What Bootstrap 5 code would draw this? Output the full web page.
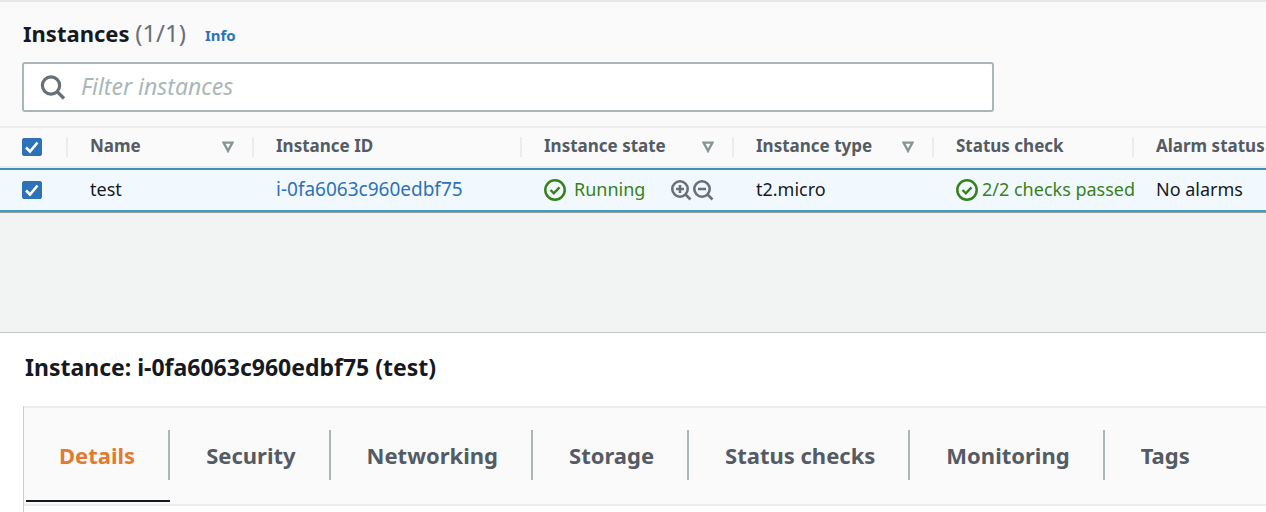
<!DOCTYPE html>
<html lang="en">
<head>
<meta charset="utf-8">
<meta name="viewport" content="width=device-width, initial-scale=1">
<title>Instances</title>
<link href="https://cdn.jsdelivr.net/npm/bootstrap@5.3.0/dist/css/bootstrap.min.css" rel="stylesheet">
<style>
  body { font-family: "Noto Sans", "Open Sans", sans-serif; font-size: 18px; line-height: 24px; color: #16191f; background: #fff; overflow-x: hidden; }
  a { text-decoration: none; color: #2d72b8; }
  .list-panel { background: #fafafa; border-top: 2px solid #e6e9e9; }
  .list-head { padding: 15px 22px 14px; }
  .page-title { font-size: 22px; line-height: 32px; padding-left: 1px; }
  .count { color: #687078; font-weight: 400; font-size: 24px; }
  .info-link { font-size: 15px; font-weight: 700; line-height: 20px; margin-left: 19px; }
  .search-box { max-width: 972px; height: 50px; border: 2px solid #aab7b8; border-radius: 3px; background: #fff; margin-top: 13px; padding: 0 16px; gap: 15px; color: #687078; }
  .search-box input { font-size: 23px; line-height: 32px; color: #16191f; outline: 0; padding: 0 0 3px; }
  .search-box input::placeholder { color: #aab7b8; font-style: italic; opacity: 1; }

  .grid-table { table-layout: fixed; width: 100%; min-width: 1266px; border-collapse: separate; border-spacing: 0; }
  .grid-table th, .grid-table td { padding: 0; white-space: nowrap; }
  .grid-table th { height: 42px; border-top: 2px solid #eaeded; border-bottom: 2px solid #eaeded; color: #545b64; font-size: 17px; font-weight: 700; }
  .grid-table td { height: 44px; border-top: 2px solid #3f90b5; border-bottom: 2px solid #3f9bc4; background: #f2f9fe; }
  .col-check { width: 66px; }
  .col-name { width: 186px; }
  .col-id { width: 268px; }
  .col-state { width: 212px; }
  .col-mid { width: 200px; }
  .head-cell { height: 20px; line-height: 20px; border-left: 2px solid #eaeded; padding: 0 18px 0 22px; }
  .head-cell > span { padding-bottom: 2px; }
  .body-cell { padding: 0 0 2px 24px; height: 40px; }
  .body-cell svg { margin-top: 2px; }
  .id-link { font-size: 19px; }
  .status-ok { color: #37811c; }
  .zoom-icons { color: #687078; margin-left: 26px; gap: 1px; }
  .sort-btn { color: #879596; line-height: 0; }
  .tick { width: 20px; height: 18px; margin: 0 0 0 22px; display: block; }
  .tick[type=checkbox] { border-radius: 2px; }
  .tick:checked { background-color: #2d72b8; border-color: #2d72b8; }
  .tick:checked[type=checkbox] { background-size: 20px 18px; background-image: url("data:image/svg+xml,%3Csvg xmlns='http://www.w3.org/2000/svg' viewBox='0 0 20 18'%3E%3Cpath d='M4 9.500l4 4L15.500 4.500' fill='none' stroke='%23fff' stroke-width='2.600'/%3E%3C/svg%3E"); }

  .split-area { height: 121px; background: #f2f4f4; border-top: 1px solid #959fa1; border-bottom: 1px solid #c3c8c8; }
  .detail-title { font-size: 23px; line-height: 32px; padding: 18px 25px 23px; }
  .tab-panel { margin-left: 23px; border-left: 1px solid #c9cfcf; min-height: 106px; }
  .tab-strip { background: #fafafa; border-top: 2px solid #eaeded; border-bottom: 2px solid #eaeded; padding-left: 2px; }
  .tab-strip .tab-btn { border: 0; border-bottom: 2px solid transparent; background: none; padding: 22px 0 20px; margin-bottom: 2px; color: #545b64; font-size: 22px; font-weight: 700; white-space: nowrap; }
  .tab-btn span { display: block; height: 50px; line-height: 50px; padding: 0 33px 0 36px; border-right: 2px solid #aab7b8; }
  .tab-strip .nav-item:last-child span { border-right: 0; }
  .tab-strip .tab-btn.active { color: #e07b33; border-bottom-color: #16191f; }
  .tab-btn.active span { padding-left: 33px; }
</style>
<script src="https://cdn.jsdelivr.net/npm/bootstrap@5.3.0/dist/js/bootstrap.bundle.min.js"></script>
</head>
<body>
<svg class="d-none" aria-hidden="true">
  <symbol id="i-ok" viewBox="0 0 22 22"><circle cx="11" cy="11" r="9.700" fill="none" stroke="currentColor" stroke-width="2.500"/><path d="M6.500 11l3.300 3.300 5.700-6" fill="none" stroke="currentColor" stroke-width="2.400"/></symbol>
  <symbol id="i-sort" viewBox="0 0 12 12"><path d="M1.600 1.600h8.800L6 9.800z" fill="none" stroke="currentColor" stroke-width="2.400"/></symbol>
  <symbol id="i-plus" viewBox="0 0 21 21"><circle cx="9" cy="9" r="7.700" fill="none" stroke="currentColor" stroke-width="2.600"/><path d="M14.500 14.500l5 5M5 9h8M9 5v8" fill="none" stroke="currentColor" stroke-width="2.600"/></symbol>
  <symbol id="i-minus" viewBox="0 0 21 21"><circle cx="9" cy="9" r="7.700" fill="none" stroke="currentColor" stroke-width="2.600"/><path d="M14.500 14.500l5 5M5 9h8" fill="none" stroke="currentColor" stroke-width="2.600"/></symbol>
</svg>

<section class="list-panel">
  <div class="list-head">
    <div class="d-flex align-items-center">
      <h1 class="page-title fw-bold m-0">Instances <span class="count">(1/1)</span></h1>
      <a href="#" class="info-link mt-1">Info</a>
    </div>
    <div class="search-box d-flex align-items-center">
      <svg width="26" height="26" viewBox="0 0 26 26" fill="none" stroke="currentColor" stroke-width="3.200" aria-hidden="true"><circle cx="11" cy="11.500" r="8.600"/><path d="M17 17.500l7 7"/></svg>
      <input type="text" class="flex-grow-1 border-0 bg-transparent" placeholder="Filter instances" aria-label="Filter instances">
    </div>
  </div>

  <div class="overflow-hidden">
    <table class="grid-table">
      <colgroup><col class="col-check"><col class="col-name"><col class="col-id"><col class="col-state"><col class="col-mid"><col class="col-mid"><col></colgroup>
      <thead>
        <tr>
          <th><input type="checkbox" class="form-check-input tick" checked aria-label="Select all instances"></th>
          <th><div class="head-cell d-flex align-items-center justify-content-between"><span>Name</span><button type="button" class="sort-btn btn p-0 border-0" aria-label="Sort by name"><svg width="12" height="12"><use href="#i-sort"/></svg></button></div></th>
          <th><div class="head-cell d-flex align-items-center"><span>Instance ID</span></div></th>
          <th><div class="head-cell d-flex align-items-center justify-content-between"><span>Instance state</span><button type="button" class="sort-btn btn p-0 border-0" aria-label="Sort by state"><svg width="12" height="12"><use href="#i-sort"/></svg></button></div></th>
          <th><div class="head-cell d-flex align-items-center justify-content-between"><span>Instance type</span><button type="button" class="sort-btn btn p-0 border-0" aria-label="Sort by type"><svg width="12" height="12"><use href="#i-sort"/></svg></button></div></th>
          <th><div class="head-cell d-flex align-items-center"><span>Status check</span></div></th>
          <th><div class="head-cell d-flex align-items-center pe-0"><span>Alarm status</span></div></th>
        </tr>
      </thead>
      <tbody>
        <tr>
          <td><input type="checkbox" class="form-check-input tick" checked aria-label="Select test"></td>
          <td><div class="body-cell d-flex align-items-center">test</div></td>
          <td><div class="body-cell d-flex align-items-center"><a href="#" class="id-link">i-0fa6063c960edbf75</a></div></td>
          <td><div class="body-cell d-flex align-items-center"><svg class="status-ok flex-shrink-0" width="22" height="22"><use href="#i-ok"/></svg><span class="status-ok ms-2">Running</span>
            <span class="zoom-icons d-flex"><button type="button" class="btn p-0 border-0 lh-1 text-reset d-flex" aria-label="Filter in"><svg width="21" height="21"><use href="#i-plus"/></svg></button><button type="button" class="btn p-0 border-0 lh-1 text-reset d-flex" aria-label="Filter out"><svg width="21" height="21"><use href="#i-minus"/></svg></button></span></div></td>
          <td><div class="body-cell d-flex align-items-center">t2.micro</div></td>
          <td class="position-relative z-1"><div class="body-cell status-ok d-flex align-items-center gap-1"><svg class="flex-shrink-0" width="22" height="22"><use href="#i-ok"/></svg>2/2 checks passed</div></td>
          <td><div class="body-cell d-flex align-items-center">No alarms</div></td>
        </tr>
      </tbody>
    </table>
  </div>
</section>

<div class="split-area"></div>

<section>
  <h2 class="detail-title fw-bold m-0">Instance: i-0fa6063c960edbf75 (test)</h2>
  <div class="tab-panel">
    <ul class="nav tab-strip flex-nowrap overflow-hidden" role="tablist">
      <li class="nav-item"><button type="button" class="tab-btn active" role="tab" aria-selected="true"><span>Details</span></button></li>
      <li class="nav-item"><button type="button" class="tab-btn" role="tab"><span>Security</span></button></li>
      <li class="nav-item"><button type="button" class="tab-btn" role="tab"><span>Networking</span></button></li>
      <li class="nav-item"><button type="button" class="tab-btn" role="tab"><span>Storage</span></button></li>
      <li class="nav-item"><button type="button" class="tab-btn" role="tab"><span>Status checks</span></button></li>
      <li class="nav-item"><button type="button" class="tab-btn" role="tab"><span>Monitoring</span></button></li>
      <li class="nav-item"><button type="button" class="tab-btn" role="tab"><span>Tags</span></button></li>
    </ul>
  </div>
</section>
</body>
</html>
